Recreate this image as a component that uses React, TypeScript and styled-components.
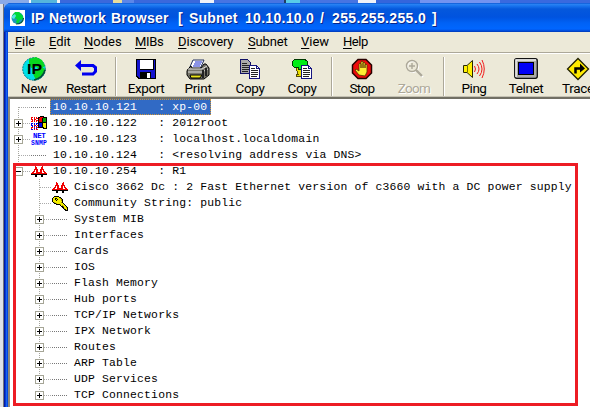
import React from 'react';
import styled, { createGlobalStyle, css } from 'styled-components';

const Global = createGlobalStyle`
  *{box-sizing:border-box}
  html,body{margin:0;padding:0;overflow:hidden}
  svg{display:block}
`;
const Desktop = styled.div`
  position:relative;width:590px;height:407px;overflow:hidden;display:flex;flex-direction:column;
  padding:3px 0 0 4px;
  background:linear-gradient(90deg,#dfe2e8 0 3px,#71747c 3px 4px,transparent 4px) 0 4px/100% 100% no-repeat,
    linear-gradient(90deg,#8aaae8 0 29px,#f4f6fa 29px 31px,#55b5dc 31px 57px,#f4f4f4 57px 60px,#3a68dc 60px 113px,#e8dc9c 113px 122px,#5c86e8 122px 134px,#3a68dc 134px 200px,#f0f2f8 200px 214px,#4774e2 214px 284px,#223c64 284px 286px,#58cce8 286px 300px,#4774e2 300px 358px,#f0f2f8 358px 376px,#3465dc 376px 420px,#7393f0 420px 500px,#3969df 500px);
`;
const Window = styled.div`
  width:586px;height:404px;display:flex;flex-direction:column;
  padding-left:4px;border-radius:7px 0 0 0;overflow:hidden;
  background:linear-gradient(90deg,#001ba8 0 1px,#0839cf 1px 2px,#1464f2 2px 3px,#0646dc 3px 4px);
`;
const TitleBar = styled.div`
  height:29px;margin-left:-4px;padding-left:6px;display:flex;align-items:center;flex-shrink:0;
  background:linear-gradient(180deg,#0046c8 0,#2b85f4 1px,#1873ee 3px,#0558dc 6px,#0053df 14px,#0062f5 20px,#0066ff 26px,#0048d5 28px,#0038b0 29px);
`;
const TitleIcon = styled.div`width:15px;height:16px;background:#fff;margin-right:6px;`;
const TitleWord = styled.span<{ $w: number; $ls: number }>`
  width:${p => p.$w}px;flex-shrink:0;letter-spacing:${p => p.$ls}px;white-space:pre;
  font:bold 14px/20px "Liberation Sans",Arial,sans-serif;color:#fff;text-shadow:1px 1px #06258b;
`;
const MenuBar = styled.div`
  height:20px;flex-shrink:0;padding-left:7px;background:#ece9d8;display:grid;
  grid-template-columns:34px 35px 51px 43px 70px 53px 42px 40px;
  font:13px/20px Roboto,sans-serif;color:#000;
`;
const MenuItem = styled.span<{ $ls: number }>`
  letter-spacing:${p => p.$ls}px;white-space:nowrap;
  &::first-letter{text-decoration:underline;text-underline-offset:2px}
`;
const Toolbar = styled.div`
  height:45px;flex-shrink:0;display:flex;background:#ece9d8;overflow:hidden;
  border-top:1px solid #aca899;box-shadow:inset 0 1px #fff,inset 0 -1px #c5c2b3;
`;
const ToolButton = styled.div<{ $off?: boolean }>`
  width:52px;flex-shrink:0;display:flex;flex-direction:column;align-items:center;padding-top:4px;
  color:${p => (p.$off ? '#aca899' : '#000')};${p => p.$off && css`text-shadow:1px 1px #fff;`}
`;
const ToolLabel = styled.span<{ $ls: number }>`
  font:13.5px/16px Roboto,sans-serif;letter-spacing:${p => p.$ls}px;white-space:nowrap;margin-top:-1px;
`;
const ToolSeparator = styled.div`
  width:2px;height:39px;margin:4px 3px 0;flex-shrink:0;background:linear-gradient(90deg,#aca899 50%,#fff 50%);
`;
const Tree = styled.div`
  flex:1;background:#fff;border-top:2px solid #716f64;border-left:2px solid #716f64;
  border-left-color:#8c897c;display:flex;flex-direction:column;
  font:11.4px/16px "Liberation Mono","Courier New",monospace;letter-spacing:.175px;color:#000;
`;
const Row = styled.div<{ $level: number }>`
  height:16px;flex-shrink:0;display:flex;align-items:center;padding-left:${p => (p.$level ? 25 : 4)}px;white-space:pre;
`;
type Trunk = 'full' | 'top' | 'bottom';
const ToggleCell = styled.div<{ $trunk: Trunk }>`
  width:9px;height:16px;display:flex;align-items:center;justify-content:center;
  background:repeating-linear-gradient(180deg,#a8a8a0 0 1px,transparent 1px 2px) no-repeat;
  background-size:1px ${p => (p.$trunk === 'full' ? 16 : 8)}px;
  background-position:4px ${p => (p.$trunk === 'bottom' ? 8 : 0)}px;
`;
const Toggle = styled.div<{ $open?: boolean }>`
  width:9px;height:9px;border:1px solid #a5a596;
  background:linear-gradient(#000,#000) center/5px 1px no-repeat,
    linear-gradient(#000,#000) center/1px ${p => (p.$open ? 1 : 5)}px no-repeat,#fff;
`;
const Dots = styled.div<{ $w: number; $dark?: boolean; $back?: boolean }>`
  width:${p => p.$w}px;height:1px;${p => p.$back && 'margin-left:-4px;'}
  background:repeating-linear-gradient(90deg,${p => (p.$dark ? '#777' : '#aaa')} 0 1px,transparent 1px 2px);
`;
const IconCell = styled.div`width:16px;height:16px;display:flex;align-items:center;`;
const NodeText = styled.span<{ $selected?: boolean }>`
  margin-left:3px;padding:0 4px 0 3px;height:16px;line-height:17px;
  ${p => p.$selected && css`background:#316ac5;color:#fff;outline:1px dotted #cf9538;outline-offset:-1px;`}
`;
const Highlight = styled.div`
  position:absolute;left:13px;top:163px;width:565px;height:243px;border:3px solid #ed1c24;
`;

const Pixels = ({ rows, colors }: { rows: string[]; colors: Record<string, string> }) => (
  <svg width={rows[0].length} height={rows.length} viewBox={`0 0 ${rows[0].length} ${rows.length}`} shapeRendering="crispEdges">
    {rows.flatMap((r, y) => [...r].map((c, x) => (colors[c] ? <rect key={`${x}-${y}`} x={x} y={y} width="1" height="1" fill={colors[c]} /> : null)))}
  </svg>
);
const inks = { k: '#000', r: '#f00000', y: '#f4ee00', o: '#9c8d00', b: '#0000e8', g: '#00a000', w: '#fff' };

const Bridge = () => <Pixels colors={inks} rows={[
  '....r......r....', '....rr....rr....', '....rr....rr....', '...rrrr..rrrr...', '...r.rr..rr.r...',
  '..rr.rr..rr.rr..', '.rr..rrrrrr..rr.', 'rrrrrrrrrrrrrrrr', 'kkkkkkkkkkkkkkkk', '....kk....kk....', '....kk....kk....']} />;
const Key = () => <Pixels colors={inks} rows={[
  '..kkkkk.........', '.kyyyyykk.......', 'kyykkyyyok......', 'kyykykyyyok.....', 'kyyykyyyyok.....', 'kyyyyyyyyyk.....',
  '.koyyyyyyok.....', '..kkoyyyyyyk....', '....kkkkoyyyk...', '........kyoyyk..', '.........kkoyyk.', '..........kkyyok',
  '...........koyyk', '............kkyk', '.............kkk']} />;
const WindowsFlag = () => <Pixels colors={inks} rows={[
  '.........kkkk...', 'rr.r.r.kkrrrkkkk', 'r..r.rrkrrrkgggk', 'rr.rr..krrrkgggk', '.r.r.rrkrrrkgggk', 'rr.r.r.krrrkgggk',
  '.......kkkkkkkkk', 'bb.b.bbkbbbkyyyk', 'b..b.b.kbbbkyyyk', 'bb.rr.rkbbbkyyyk', '.b.b.b.kbbbkyyyk', 'rr.r.rrkkkkkkyyk', 'r..b.b......kkkk', 'bb.r.rr.........']} />;
const NetSnmp = () => (
  <svg width="16" height="14" viewBox="0 0 16 14" fill="#0000ff" fontFamily="Liberation Mono" fontWeight="bold">
    <text x="2" y="6" fontSize="7.5" textLength="13">NET</text><text x="0" y="13" fontSize="7.5" textLength="16" lengthAdjust="spacingAndGlyphs">SNMP</text>
  </svg>
);
const Globe = () => (
  <svg width="15" height="16" viewBox="0 0 15 16">
    <circle cx="7.5" cy="8" r="6" fill="#1c98b8" /><path d="M2 6l3-4h4l4 4v3l-3 1-2 4-2-2 1-3-3-1z" fill="#00d838" />
    <path d="M2 6l3-2 1 2-2 3-2-1z" fill="#55e6e8" /><path d="M6 14q7 0 7.5-6" fill="none" stroke="#075c45" strokeWidth="1.2" />
  </svg>
);
const NewIcon = () => (
  <svg width="26" height="24" viewBox="0 0 26 24">
    <circle cx="13" cy="12" r="11.3" fill="#00dfe8" stroke="#087484" strokeDasharray="2 1" />
    <path d="M8 2l7-2 6 3 3 6-5 3-4-2-5 1-2-5zM14 13l7-3 3 2-3 7-6 4-3-6z" fill="#08d820" />
    <path d="M24 13q-2 8-11 10" fill="none" stroke="#064c35" strokeWidth="1.6" />
    <text x="6" y="17.3" fontFamily="Liberation Sans" fontSize="15" fontWeight="bold" textLength="15" lengthAdjust="spacingAndGlyphs">IP</text>
  </svg>
);
const RestartIcon = () => (
  <svg width="24" height="24" viewBox="0 0 24 24"><path d="M3 8.5h16l2.500 2v4l-2.500 2.500H8" fill="none" stroke="#0000f0" strokeWidth="3" /><path d="M1 8.500L7 3v11z" fill="#0000f0" /></svg>
);
const ExportIcon = () => (
  <svg width="22" height="24" viewBox="0 0 22 24" shapeRendering="crispEdges"><path d="M1 2h20v20H3l-2-2z" fill="#000" /><path d="M2 3h18v18H4l-2-2z" fill="#1414cf" />
    <path d="M5 3h13v9H5z" fill="#fff" /><path d="M18 3h1v10H5v-1h13zM5 15h11v7H5z" fill="#000" /><path d="M12 16h3v5h-3z" fill="#fff" /></svg>
);
const PrintIcon = () => (
  <svg width="24" height="24" viewBox="0 0 24 24"><path d="M7 3h11l-4 9H3z" fill="#fff" stroke="#223060" /><path d="M9 5h7M8 7h7M7 9h7" stroke="#1726cc" />
    <path d="M2 12l3-3 1 2h9l3-4h2l3 4v7l-5 4H4l-3-4v-4z" fill="#77766a" stroke="#000" /><path d="M2 12h14l5-3M2 15h14l6-3" fill="none" stroke="#ddd" />
    <path d="M4 18h12l-2 3H5z" fill="#e9e41c" stroke="#000" /><path d="M17 13v8M20 11v8" stroke="#222" strokeWidth="2" /></svg>
);
const Sheets = ({ tree }: { tree?: boolean }) => (
  <svg width="24" height="24" viewBox="0 0 24 24" shapeRendering="crispEdges">
    {tree ? <><path d="M8 10h5v7h2v2H6v-2h2l-2-6z" fill="#eadf00" stroke="#584c00" /><path d="M4 3l3-1h7l3 2v4l-3 2h-3v2H8v-2H4L2 8V5z" fill="#00ed16" stroke="#003900" /></>
      : <><path d="M2.5 2.5h7l3 3v11h-10z" fill="#aaa" stroke="#111164" /><path d="M4 6h5M4 8h7M4 10h7M4 12h7M4 14h6" stroke="#222" /></>}
    <path d="M11.5 8.5h7l3 3v10h-10z" fill="#fff" stroke="#151580" /><path d="M18.5 8.5v3h3" fill="none" stroke="#151580" />
    <path d="M13 11.5h4M13 13.5h7M13 15.5h7M13 17.5h7M13 19.5h6" stroke="#222" />
  </svg>
);
const StopIcon = () => (
  <svg width="22" height="24" viewBox="0 0 22 24"><path d="M7 2.5h8l5.5 5.5v8L15 21.5H7L1.5 16V8z" fill="#ee0b0b" stroke="#280000" strokeWidth="1.5" />
    <path d="M8 18l-4-5 1-1 3 2V7l1-1 1 1v4-6l1-1 1 1v6-5l1-1 1 1v5-3l1-1 1 1v7l-2 4z" fill="#ffed31" stroke="#583400" strokeWidth=".8" /></svg>
);
const ZoomIcon = () => (
  <svg width="22" height="24" viewBox="0 0 22 24" fill="none"><g stroke="#fff" transform="translate(1 1)"><circle cx="9" cy="9" r="5.5" /><path d="M13 13l6 6" strokeWidth="2" /></g>
    <g stroke="#aca899" strokeWidth="1.4"><circle cx="9" cy="9" r="5.5" /><path d="M9 6v6M6 9h6" /><path d="M13 13l6 6" strokeWidth="2.4" /></g></svg>
);
const PingIcon = () => (
  <svg width="22" height="24" viewBox="0 0 22 24" fill="none"><path d="M.5 8.5H4L9.500 3.500v17L4 15.500H.500z" fill="#fff000" stroke="#282800" /><path d="M4.500 9v6" stroke="#777000" />
    <path d="M11.500 9q2 3 0 6M14 7q4 5 0 10M16.500 5q5 7 0 14M19 3q4.500 9 0 18" stroke="#f01818" /></svg>
);
const TelnetIcon = () => (
  <svg width="24" height="24" viewBox="0 0 24 24"><rect x=".7" y="1.700" width="22.600" height="19.600" rx="2" fill="#aaa" stroke="#111" strokeWidth="1.300" /><path d="M2 20V3h20" fill="none" stroke="#eee" strokeWidth="1.500" /><rect x="4.500" y="5.500" width="15" height="12" fill="#0000f5" stroke="#000" /></svg>
);
const TraceIcon = () => (
  <svg width="24" height="24" viewBox="0 0 24 24"><path d="M12 1.500L22.500 12 12 22.500 1.500 12z" fill="#ffeb00" stroke="#202000" strokeWidth="1.300" /><path d="M9.500 16.500v-5h6" fill="none" stroke="#000" strokeWidth="2.500" /><path d="M14 6.500l5 5-5 4z" fill="#000" /></svg>
);

const title: [string, number, number][] = [['IP', 18, .1], ['Network', 62, .25], ['Browser', 67, .25], ['[', 11, 0], ['Subnet', 56, .2], ['10.10.10.0', 75, .3], ['/', 12, 0], ['255.255.255.0', 100, .35], [']', 10, 0]];
const menus: [string, number][] = [['File', -.1], ['Edit', -.1], ['Nodes', 0], ['MIBs', -.35], ['Discovery', -.1], ['Subnet', -.15], ['View', 0], ['Help', -.45]];
const tools: ([React.ReactNode, string, number, boolean?] | null)[] = [
  [<NewIcon />, 'New', -.2], [<RestartIcon />, 'Restart', -.5], null,
  [<ExportIcon />, 'Export', -.4], [<PrintIcon />, 'Print', -.2], [<Sheets />, 'Copy', -.4], [<Sheets tree />, 'Copy', -.4], null,
  [<StopIcon />, 'Stop', -.6], [<ZoomIcon />, 'Zoom', -.7, true], null,
  [<PingIcon />, 'Ping', -.5], [<TelnetIcon />, 'Telnet', -.4], [<TraceIcon />, 'Trace', -.3]];

interface TreeNode { text: string; level: number; trunk: Trunk; box?: 'plus' | 'minus'; icon?: React.ReactNode; selected?: boolean }
const host = (ip: string, name: string) => `${ip}   : ${name}`;
const nodes: TreeNode[] = [
  { text: host('10.10.10.121', 'xp-00'), level: 0, trunk: 'bottom', selected: true },
  { text: host('10.10.10.122', '2012root'), level: 0, trunk: 'full', box: 'plus', icon: <WindowsFlag /> },
  { text: host('10.10.10.123', 'localhost.localdomain'), level: 0, trunk: 'full', box: 'plus', icon: <NetSnmp /> },
  { text: host('10.10.10.124', '<resolving address via DNS>'), level: 0, trunk: 'full' },
  { text: host('10.10.10.254', 'R1'), level: 0, trunk: 'top', box: 'minus', icon: <Bridge /> },
  { text: 'Cisco 3662 Dc : 2 Fast Ethernet version of c3660 with a DC power supply', level: 1, trunk: 'full', icon: <Bridge /> },
  { text: 'Community String: public', level: 1, trunk: 'full', icon: <Key /> },
  ...['System MIB', 'Interfaces', 'Cards', 'IOS', 'Flash Memory', 'Hub ports', 'TCP/IP Networks', 'IPX Network', 'Routes', 'ARP Table', 'UDP Services', 'TCP Connections']
    .map((text, i): TreeNode => ({ text, level: 1, trunk: i === 11 ? 'top' : 'full', box: 'plus' })),
];

export default function App() {
  return (
    <Desktop>
      <Global />
      <Window>
        <TitleBar>
          <TitleIcon><Globe /></TitleIcon>
          {title.map(([t, w, ls]) => <TitleWord key={t} $w={w} $ls={ls}>{t}</TitleWord>)}
        </TitleBar>
        <MenuBar>{menus.map(([t, ls]) => <MenuItem key={t} $ls={ls}>{t}</MenuItem>)}</MenuBar>
        <Toolbar>
          {tools.map((t, i) => t
            ? <ToolButton key={i} $off={t[3]}>{t[0]}<ToolLabel $ls={t[2]}>{t[1]}</ToolLabel></ToolButton>
            : <ToolSeparator key={i} />)}
        </Toolbar>
        <Tree>
          {nodes.map(n => (
            <Row key={n.text} $level={n.level}>
              <ToggleCell $trunk={n.trunk}>{n.box && <Toggle $open={n.box === 'minus'} />}</ToggleCell>
              <Dots $w={n.box ? 8 : 12} $back={!n.box} />
              <IconCell>{n.icon ?? <Dots $w={16} $dark />}</IconCell>
              <NodeText $selected={n.selected}>{n.text}</NodeText>
            </Row>
          ))}
        </Tree>
      </Window>
      <Highlight />
    </Desktop>
  );
}
